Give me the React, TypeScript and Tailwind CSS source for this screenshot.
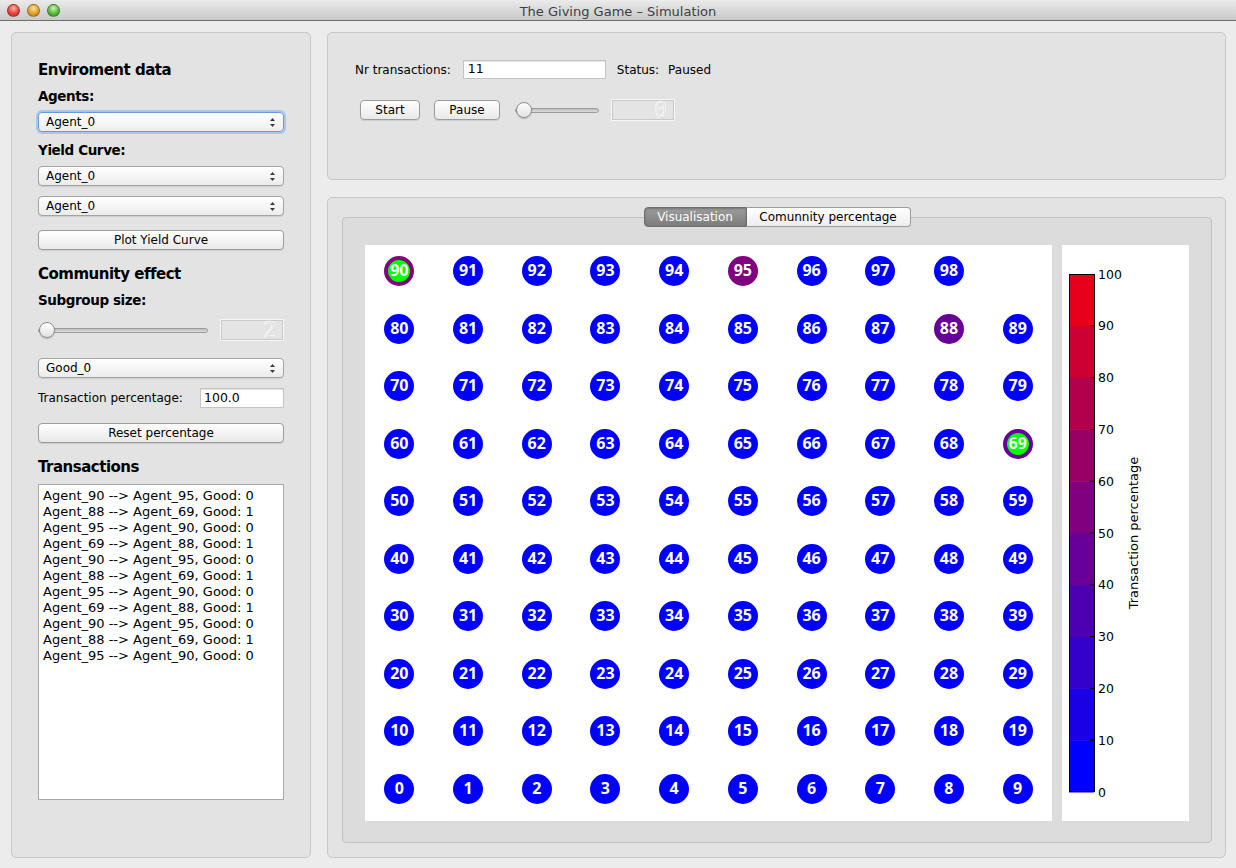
import React from "react";

const transactions = [
  "Agent_90 --> Agent_95, Good: 0",
  "Agent_88 --> Agent_69, Good: 1",
  "Agent_95 --> Agent_90, Good: 0",
  "Agent_69 --> Agent_88, Good: 1",
  "Agent_90 --> Agent_95, Good: 0",
  "Agent_88 --> Agent_69, Good: 1",
  "Agent_95 --> Agent_90, Good: 0",
  "Agent_69 --> Agent_88, Good: 1",
  "Agent_90 --> Agent_95, Good: 0",
  "Agent_88 --> Agent_69, Good: 1",
  "Agent_95 --> Agent_90, Good: 0",
];

// colour for a 10% band of the blue -> red map
const bandColor = (i: number) => {
  const r = Math.round(25.5 * i);
  return `rgb(${r},0,${255 - r})`;
};

const Arrows = () => (
  <svg width="7" height="11" viewBox="0 0 7 11" className="shrink-0">
    <path d="M3.5 1 L6 4 H1 Z" fill="#3a3a3a" />
    <path d="M3.5 10 L6 7 H1 Z" fill="#3a3a3a" />
  </svg>
);

const Select = ({ value, focused }: { value: string; focused?: boolean }) => (
  <div
    className={
      focused
        ? "flex h-[20px] items-center justify-between rounded-[4px] border border-[#6b9ad8] bg-gradient-to-b from-white to-[#eeeeee] pl-[7px] pr-[7px] text-[12px] shadow-[0_0_0_2px_#a9c7ee]"
        : "flex h-[20px] items-center justify-between rounded-[4px] border border-[#a4a4a4] bg-gradient-to-b from-white to-[#ececec] pl-[7px] pr-[7px] text-[12px] shadow-[0_1px_1px_rgba(0,0,0,0.1)]"
    }
  >
    <span>{value}</span>
    <Arrows />
  </div>
);

const Button = ({ label, className = "" }: { label: string; className?: string }) => (
  <div
    className={`flex h-[20px] items-center justify-center rounded-[4px] border border-[#9c9c9c] bg-gradient-to-b from-white to-[#e9e9e9] text-[12px] shadow-[0_1px_1px_rgba(0,0,0,0.1)] ${className}`}
  >
    {label}
  </div>
);

const Slider = ({ className = "" }: { className?: string }) => (
  <div className={`relative flex h-[18px] items-center ${className}`}>
    <div className="h-[5px] w-full rounded-full border border-[#9b9b9b] bg-gradient-to-b from-[#bdbdbd] to-[#dcdcdc]" />
    <div className="absolute left-[1px] top-[1px] h-[16px] w-[16px] rounded-full border border-[#8e8e8e] bg-gradient-to-b from-white to-[#e2e2e2] shadow-[0_1px_1px_rgba(0,0,0,0.2)]" />
  </div>
);

const Lcd = ({ digit }: { digit: string }) => (
  <div className="flex h-[22px] w-[64px] items-center justify-end border border-[#f7f7f7] bg-[#e4e4e4] pr-[7px] shadow-[inset_0_0_0_1px_#c9c9c9]">
    <span className="font-['DejaVu_Sans_Mono',monospace] text-[21px] font-light leading-none text-transparent [-webkit-text-stroke:0.6px_#ffffff] [text-shadow:1px_1px_0_rgba(0,0,0,0.06)]">
      {digit}
    </span>
  </div>
);

const Light = ({ cls }: { cls: string }) => (
  <div className={`h-[13px] w-[13px] rounded-full border border-black/30 ${cls}`} />
);

const Node = ({ n }: { n: number }) => {
  let cls = "bg-[#0000ff]";
  if (n === 90) cls = "border-[4px] border-[#80007f] bg-[#00ff00]";
  if (n === 69) cls = "border-[4px] border-[#660099] bg-[#00ff00]";
  if (n === 95) cls = "bg-[#80007f]";
  if (n === 88) cls = "bg-[#660099]";
  return (
    <div
      className={`flex h-[30px] w-[30px] items-center justify-center rounded-full pb-[2px] font-['Open_Sans',sans-serif] text-[16px] font-bold leading-none text-white ${cls}`}
    >
      {n}
    </div>
  );
};

const ColorBar = () => {
  const top = 29;
  const h = 518;
  const step = h / 10;
  return (
    <svg width="127" height="576" className="font-['DejaVu_Sans',sans-serif]">
      {Array.from({ length: 10 }, (_, i) => (
        <rect key={i} x={7} y={top + h - (i + 1) * step} width={25} height={step + 0.5} fill={bandColor(i)} />
      ))}
      <rect x={7.5} y={top + 0.5} width={25} height={h - 1} fill="none" stroke="#000" strokeWidth={1} />
      {Array.from({ length: 9 }, (_, i) => (
        <line key={i} x1={28} x2={32.5} y1={top + h - (i + 1) * step} y2={top + h - (i + 1) * step} stroke="#000" />
      ))}
      {Array.from({ length: 11 }, (_, i) => (
        <text key={i} x={36} y={top + h - i * step} fontSize={12.5} dominantBaseline="central" fill="#000">
          {i * 10}
        </text>
      ))}
      <text
        transform="translate(71 288) rotate(-90)"
        textAnchor="middle"
        dominantBaseline="central"
        fontSize={13}
        fill="#000"
      >
        Transaction percentage
      </text>
    </svg>
  );
};

const rows = [9, 8, 7, 6, 5, 4, 3, 2, 1, 0];
const cols = [0, 1, 2, 3, 4, 5, 6, 7, 8, 9];

export default function App() {
  return (
    <div className="flex h-[868px] w-[1236px] flex-col overflow-hidden bg-[#ececec] font-['DejaVu_Sans',sans-serif] text-black">
      {/* title bar */}
      <div className="relative flex h-[21px] shrink-0 items-center border-b border-[#6e6e6e] bg-gradient-to-b from-[#ebebeb] to-[#c9c9c9]">
        <div className="flex gap-[7px] pl-[7px]">
          <Light cls="bg-[radial-gradient(circle_at_50%_30%,#ffb1ab,#e4463f_55%,#a92f29)]" />
          <Light cls="bg-[radial-gradient(circle_at_50%_30%,#ffe2a0,#e1a02a_55%,#a8701a)]" />
          <Light cls="bg-[radial-gradient(circle_at_50%_30%,#c9f5b6,#5eb942_55%,#3b8425)]" />
        </div>
        <div className="absolute inset-x-0 top-[2px] text-center text-[13px] text-[#3c3f4a]">
          The Giving Game – Simulation
        </div>
      </div>

      <div className="flex flex-1 gap-[16px] pb-[10px] pl-[11px] pr-[10px] pt-[11px]">
        {/* left panel */}
        <div className="flex w-[300px] flex-col rounded-[5px] border border-[#c8c8c8] bg-[#e3e3e3] px-[26px] pt-[27px]">
          <div className="text-[15px] font-bold leading-[20px] tracking-[-0.5px]">Enviroment data</div>
          <div className="mt-[7px] text-[13.5px] font-bold leading-[18px] tracking-[-0.4px]">Agents:</div>
          <div className="mt-[7px]">
            <Select value="Agent_0" focused />
          </div>
          <div className="mt-[9px] text-[13.5px] font-bold leading-[18px] tracking-[-0.4px]">Yield Curve:</div>
          <div className="mt-[7px]">
            <Select value="Agent_0" />
          </div>
          <div className="mt-[10px]">
            <Select value="Agent_0" />
          </div>
          <Button label="Plot Yield Curve" className="mt-[14px]" />
          <div className="mt-[14px] text-[15px] font-bold leading-[20px] tracking-[-0.5px]">Community effect</div>
          <div className="mt-[7px] text-[13.5px] font-bold leading-[18px] tracking-[-0.4px]">Subgroup size:</div>
          <div className="mt-[10px] flex h-[22px] items-center gap-[12px]">
            <Slider className="w-[170px]" />
            <Lcd digit="2" />
          </div>
          <div className="mt-[17px]">
            <Select value="Good_0" />
          </div>
          <div className="mt-[10px] flex h-[20px] items-center justify-between text-[12px]">
            <span>Transaction percentage:</span>
            <div className="flex h-[20px] w-[84px] items-center border border-[#c4c4c4] bg-white pl-[3px] text-[12.5px] shadow-[inset_0_1px_1px_rgba(0,0,0,0.12)]">
              100.0
            </div>
          </div>
          <Button label="Reset percentage" className="mt-[15px]" />
          <div className="mt-[14px] text-[15px] font-bold leading-[20px] tracking-[-0.5px]">Transactions</div>
          <div className="mt-[7px] h-[316px] border border-[#a9a9a9] bg-white pl-[4px] pt-[3px] text-[13px] leading-[16px]">
            {transactions.map((t, i) => (
              <div key={i}>{t}</div>
            ))}
          </div>
        </div>

        {/* right column */}
        <div className="flex flex-1 flex-col gap-[17px]">
          <div className="h-[148px] rounded-[5px] border border-[#c8c8c8] bg-[#e3e3e3] pl-[27px] pt-[27px] text-[12px]">
            <div className="flex h-[19px] items-center">
              <span>Nr transactions:</span>
              <div className="ml-[12px] flex h-[19px] w-[143px] items-center border border-[#c4c4c4] bg-white pl-[4px] text-[12.5px] shadow-[inset_0_1px_1px_rgba(0,0,0,0.12)]">
                11
              </div>
              <span className="ml-[11px]">Status:</span>
              <span className="ml-[9px]">Paused</span>
            </div>
            <div className="mt-[20px] flex h-[22px] items-center pl-[5px]">
              <Button label="Start" className="w-[60px]" />
              <Button label="Pause" className="ml-[14px] w-[66px]" />
              <Slider className="ml-[15px] w-[84px]" />
              <div className="ml-[12px]">
                <Lcd digit="0" />
              </div>
            </div>
          </div>

          <div className="flex flex-1 flex-col rounded-[5px] border border-[#c8c8c8] bg-[#e3e3e3] pb-[14px] pl-[14px] pr-[13px] pt-[9px]">
            <div className="relative z-10 flex h-[20px] justify-center text-[12px]">
              <div className="flex w-[103px] items-center justify-center rounded-l-[4px] border border-[#6f6f6f] bg-gradient-to-b from-[#9d9d9d] to-[#7c7c7c] text-white shadow-[inset_0_1px_2px_rgba(0,0,0,0.25)]">
                Visualisation
              </div>
              <div className="flex w-[164px] items-center justify-center rounded-r-[4px] border border-l-0 border-[#9c9c9c] bg-gradient-to-b from-white to-[#ededed]">
                Comunnity percentage
              </div>
            </div>
            <div className="-mt-[10px] flex flex-1 gap-[10px] rounded-[4px] border border-[#c2c2c2] bg-[#dcdcdc] pb-[21px] pl-[22px] pr-[22px] pt-[27px]">
              <div className="grid h-[576px] w-[687px] grid-cols-10 auto-rows-[57.5px] bg-white">
                {rows.map((r) =>
                  cols.map((c) => {
                    const n = r * 10 + c;
                    return (
                      <div key={n} className="flex justify-center pt-[11px]">
                        {n !== 99 && <Node n={n} />}
                      </div>
                    );
                  })
                )}
              </div>
              <div className="h-[576px] w-[127px] bg-white">
                <ColorBar />
              </div>
            </div>
          </div>
        </div>
      </div>
    </div>
  );
}
